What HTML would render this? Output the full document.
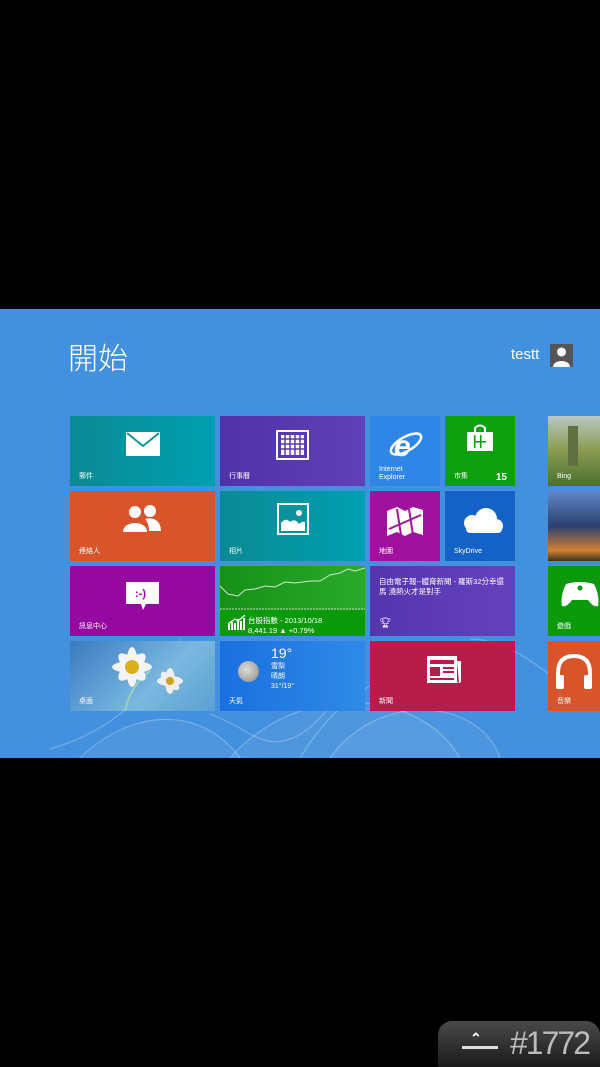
<!DOCTYPE html>
<html><head><meta charset="utf-8"><style>
body{margin:0;width:600px;height:1067px;background:#000;position:relative;overflow:hidden;font-family:"Liberation Sans","Noto Sans CJK TC",sans-serif;color:#fff}
.bg{position:absolute;left:0;top:309px;width:600px;height:449px;background:#4391de;overflow:hidden}
.t{position:absolute;overflow:hidden}
.l{position:absolute;left:9px;bottom:5px;font-size:7px;line-height:8px}
.ic{position:absolute}
</style></head><body>
<div class="bg">
<svg width="600" height="449" style="position:absolute;left:0;top:0" fill="none" stroke="rgba(255,255,255,0.25)" stroke-width="1.2">
<path d="M50 440 C120 420 150 380 180 330"/><path d="M230 449 C300 370 420 380 460 449" fill="rgba(255,255,255,0.06)"/>
<path d="M80 449 C130 400 200 395 240 449" fill="rgba(255,255,255,0.06)"/>
<path d="M210 405 C250 420 260 440 290 430 C320 420 340 380 360 360"/>
<path d="M300 449 C330 400 360 380 400 360"/><path d="M470 330 C520 330 560 380 600 400"/>
<path d="M330 449 C380 380 480 390 500 449" fill="rgba(255,255,255,0.05)"/>
</svg>
<div style="position:absolute;left:68px;top:25px;font-size:30px;font-weight:300;font-family:'Noto Sans CJK TC',sans-serif">開始</div>
<div style="position:absolute;left:511px;top:37px;font-size:15px">testt</div>
<div style="position:absolute;left:550px;top:35px;width:23px;height:23px;background:#555">
<svg width="23" height="23"><circle cx="11.5" cy="8" r="4.5" fill="#fff"/><path d="M3 23 C3 15 20 15 20 23Z" fill="#fff"/></svg></div>
</div>

<div class="t" style="left:70px;top:416px;width:145px;height:70px;background:linear-gradient(90deg,#0a8a94,#00a0b0)">
<svg class="ic" style="left:56px;top:16px" width="34" height="24"><rect width="34" height="24" fill="#fff"/><path d="M1 1 L17 14 L33 1" stroke="#0a929e" stroke-width="2" fill="none"/></svg>
<div class="l">郵件</div></div>
<div class="t" style="left:220px;top:416px;width:145px;height:70px;background:linear-gradient(90deg,#5032a8,#6040b8)">
<svg class="ic" style="left:56px;top:14px" width="33" height="30"><rect x="1" y="1" width="31" height="28" fill="none" stroke="#fff" stroke-width="2"/><g fill="#fff"><rect x="5" y="5" width="23" height="20"/></g><g stroke="#5a3aae" stroke-width="1.5"><path d="M5 9H28M5 14H28M5 19H28M9 5V25M14 5V25M19 5V25M24 5V25"/></g></svg>
<div class="l">行事曆</div></div>
<div class="t" style="left:370px;top:416px;width:70px;height:70px;background:#2f86e6">
<svg class="ic" style="left:18px;top:12px" width="36" height="34"><ellipse cx="18" cy="16" rx="17" ry="7" transform="rotate(-30 18 16)" fill="none" stroke="#fff" stroke-width="2.5"/><text x="6" y="28" font-size="30" font-weight="bold" font-style="italic" fill="#fff" font-family="Liberation Sans">e</text></svg>
<div class="l" style="bottom:4px">Internet<br>Explorer</div></div>
<div class="t" style="left:445px;top:416px;width:70px;height:70px;background:#0da00d">
<svg class="ic" style="left:20px;top:8px" width="30" height="28"><path d="M10 8 V4 Q15 -1 20 4 V8" stroke="#fff" stroke-width="2" fill="none"/><rect x="2" y="8" width="26" height="19" fill="#fff"/><g fill="#0da00d"><rect x="9" y="11" width="1.5" height="13"/><rect x="15" y="11" width="1.5" height="13"/><rect x="9" y="17" width="12" height="1.5"/></g></svg>
<div class="l">市集</div><div style="position:absolute;right:8px;bottom:3px;font-size:10px;font-weight:bold">15</div></div>
<div class="t" style="left:548px;top:416px;width:52px;height:70px;background:linear-gradient(180deg,#b8c8c0,#8a9a50 50%,#4a7030)">
<div style="position:absolute;left:20px;top:10px;width:10px;height:40px;background:#607040"></div><div class="l">Bing</div></div>

<div class="t" style="left:70px;top:491px;width:145px;height:70px;background:#d9542a">
<svg class="ic" style="left:53px;top:14px" width="40" height="28" fill="#fff"><circle cx="12" cy="7" r="6"/><path d="M0 27 C0 15 24 15 24 27Z"/><circle cx="27" cy="6" r="6"/><path d="M22 14 C28 12 38 14 38 26 H26 C26 20 24 16 22 14Z"/></svg>
<div class="l">連絡人</div></div>
<div class="t" style="left:220px;top:491px;width:145px;height:70px;background:linear-gradient(90deg,#0a8a94,#00a0b0)">
<svg class="ic" style="left:57px;top:12px" width="32" height="32"><rect x="1" y="1" width="30" height="30" fill="none" stroke="#fff" stroke-width="2"/><rect x="4" y="4" width="24" height="24" fill="#0a929e"/><circle cx="22" cy="10" r="3" fill="#fff"/><path d="M4 28 V20 Q9 14 13 19 Q18 15 22 21 Q25 18 28 19 V28Z" fill="#fff"/></svg>
<div class="l">相片</div></div>
<div class="t" style="left:370px;top:491px;width:70px;height:70px;background:#a0119e">
<svg class="ic" style="left:17px;top:16px" width="36" height="30" fill="#fff"><path d="M0 4 L10 0 L18 4 L26 0 L36 3 V28 L26 25 L18 29 L10 25 L0 29Z"/><path d="M2 22 L34 8 M10 2 L14 28 M22 2 L26 28" stroke="#a0119e" stroke-width="2"/></svg>
<div class="l">地圖</div></div>
<div class="t" style="left:445px;top:491px;width:70px;height:70px;background:#1462c8">
<svg class="ic" style="left:13px;top:15px" width="46" height="28" fill="#fff"><circle cx="28" cy="13" r="11"/><circle cx="14" cy="17" r="8"/><circle cx="38" cy="20" r="7"/><rect x="8" y="18" width="36" height="9" rx="4"/></svg>
<div class="l">SkyDrive</div></div>
<div class="t" style="left:548px;top:491px;width:52px;height:70px;background:linear-gradient(180deg,#6088c8,#2a4070 50%,#d08030 85%,#403020)"></div>

<div class="t" style="left:70px;top:566px;width:145px;height:70px;background:#940aa0">
<svg class="ic" style="left:56px;top:16px" width="34" height="28"><path d="M0 0 H33 V22 H20 L17 28 L15 22 H0Z" fill="#fff"/><text x="9" y="15" font-size="11" font-weight="bold" fill="#940aa0" font-family="Liberation Sans">:-)</text></svg>
<div class="l">訊息中心</div></div>
<div class="t" style="left:220px;top:566px;width:145px;height:70px;background:linear-gradient(90deg,#179017,#2aaa2a)">
<svg width="145" height="70" style="position:absolute;left:0;top:0"><path d="M0 20 L8 28 L18 30 L25 24 L35 23 L45 20 L55 21 L65 16 L75 17 L90 15 L100 15 L110 9 L120 7 L128 3 L135 5 L145 2" stroke="#cfe8cf" stroke-width="1" fill="none"/><path d="M0 43 H145" stroke="#bfe0bf" stroke-dasharray="2 1"/><rect x="0" y="44" width="145" height="26" fill="#0c9a0c"/><path d="M9 64 V58 M12 64 V56 M15 64 V57 M18 64 V53 M21 64 V55 M24 64 V52" stroke="#fff" stroke-width="2"/><path d="M8 58 L15 53 L18 55 L25 49" stroke="#fff" stroke-width="1.3" fill="none"/></svg>
<div style="position:absolute;left:28px;top:50px;font-size:7.5px;line-height:10px">台股指數 - 2013/10/18<br>8,441.19 ▲ +0.79%</div></div>
<div class="t" style="left:370px;top:566px;width:145px;height:70px;background:linear-gradient(90deg,#5535ae,#6542bc)">
<div style="position:absolute;left:9px;top:11px;font-size:7.5px;line-height:10px">自由電子報--體育新聞 - 羅斯32分幸還<br>馬 澆熱火才是對手</div>
<div style="position:absolute;left:9px;top:52px;font-size:10px">🏆︎</div></div>
<div class="t" style="left:548px;top:566px;width:52px;height:70px;background:#0c9a0c">
<svg class="ic" style="left:12px;top:14px" width="40" height="30" fill="#fff"><path d="M6 4 Q20 0 34 4 Q40 16 38 26 Q34 28 28 20 H12 Q6 28 2 26 Q0 16 6 4Z"/><circle cx="20" cy="8" r="2.5" fill="#0c9a0c"/></svg>
<div class="l">遊戲</div></div>

<div class="t" style="left:70px;top:641px;width:145px;height:70px;background:linear-gradient(135deg,#3a7ac0,#7ab8e0 60%,#5aa0d0)">
<svg width="145" height="70" style="position:absolute"><path d="M55 70 Q60 45 80 30" stroke="#9cd0c0" stroke-width="2" fill="none"/><g fill="#f4f4f4"><ellipse cx="62" cy="26" rx="20" ry="6"/><ellipse cx="62" cy="26" rx="6" ry="20"/><ellipse cx="62" cy="26" rx="18" ry="7" transform="rotate(45 62 26)"/><ellipse cx="62" cy="26" rx="18" ry="7" transform="rotate(-45 62 26)"/></g><circle cx="62" cy="26" r="7" fill="#d8b020"/><g fill="#eee"><ellipse cx="100" cy="40" rx="13" ry="5"/><ellipse cx="100" cy="40" rx="5" ry="13"/><ellipse cx="100" cy="40" rx="12" ry="5" transform="rotate(45 100 40)"/></g><circle cx="100" cy="40" r="4" fill="#d0a020"/></svg>
<div class="l">桌面</div></div>
<div class="t" style="left:220px;top:641px;width:145px;height:70px;background:linear-gradient(90deg,#1a70e0,#2f8ae6)">
<div style="position:absolute;left:18px;top:20px;width:21px;height:21px;border-radius:50%;background:radial-gradient(circle at 40% 40%,#ddd,#888)"></div>
<div style="position:absolute;left:51px;top:5px;font-size:14px;line-height:15px">19°</div>
<div style="position:absolute;left:51px;top:21px;font-size:7px;line-height:10px">雪梨<br>晴朗<br>31°/19°</div>
<div class="l">天氣</div></div>
<div class="t" style="left:370px;top:641px;width:145px;height:70px;background:#b81c48">
<svg class="ic" style="left:57px;top:15px" width="34" height="27"><path d="M0 0 H30 V24 Q30 27 33 27 H0Z" fill="#fff"/><path d="M30 5 H34 V25 Q34 27 32 27" fill="#fff"/><g fill="#b81c48"><rect x="3" y="4" width="24" height="4"/><rect x="3" y="11" width="10" height="9"/><rect x="16" y="11" width="11" height="2"/><rect x="16" y="15" width="11" height="2"/><rect x="3" y="22" width="24" height="2"/></g></svg>
<div class="l">新聞</div></div>
<div class="t" style="left:548px;top:641px;width:52px;height:70px;background:#d9542a">
<svg class="ic" style="left:6px;top:12px" width="46" height="38"><path d="M4 30 V20 Q4 3 20 3 Q36 3 36 20 V30" stroke="#fff" stroke-width="4" fill="none"/><rect x="2" y="22" width="8" height="14" rx="2" fill="#fff"/><rect x="30" y="22" width="8" height="14" rx="2" fill="#fff"/></svg>
<div class="l">音樂</div></div>

<div style="position:absolute;left:438px;top:1021px;width:162px;height:46px;background:linear-gradient(#4a4a4a,#1a1a1a);border-radius:14px 14px 0 0"></div>
<div style="position:absolute;left:462px;top:1046px;width:36px;height:3px;background:#ddd"></div>
<div style="position:absolute;left:470px;top:1030px;font-size:14px;color:#fff;font-weight:bold">⌃</div>
<div style="position:absolute;left:510px;top:1025px;font-size:32px;color:#bbb;letter-spacing:-2px">#1772</div>
</body></html>
